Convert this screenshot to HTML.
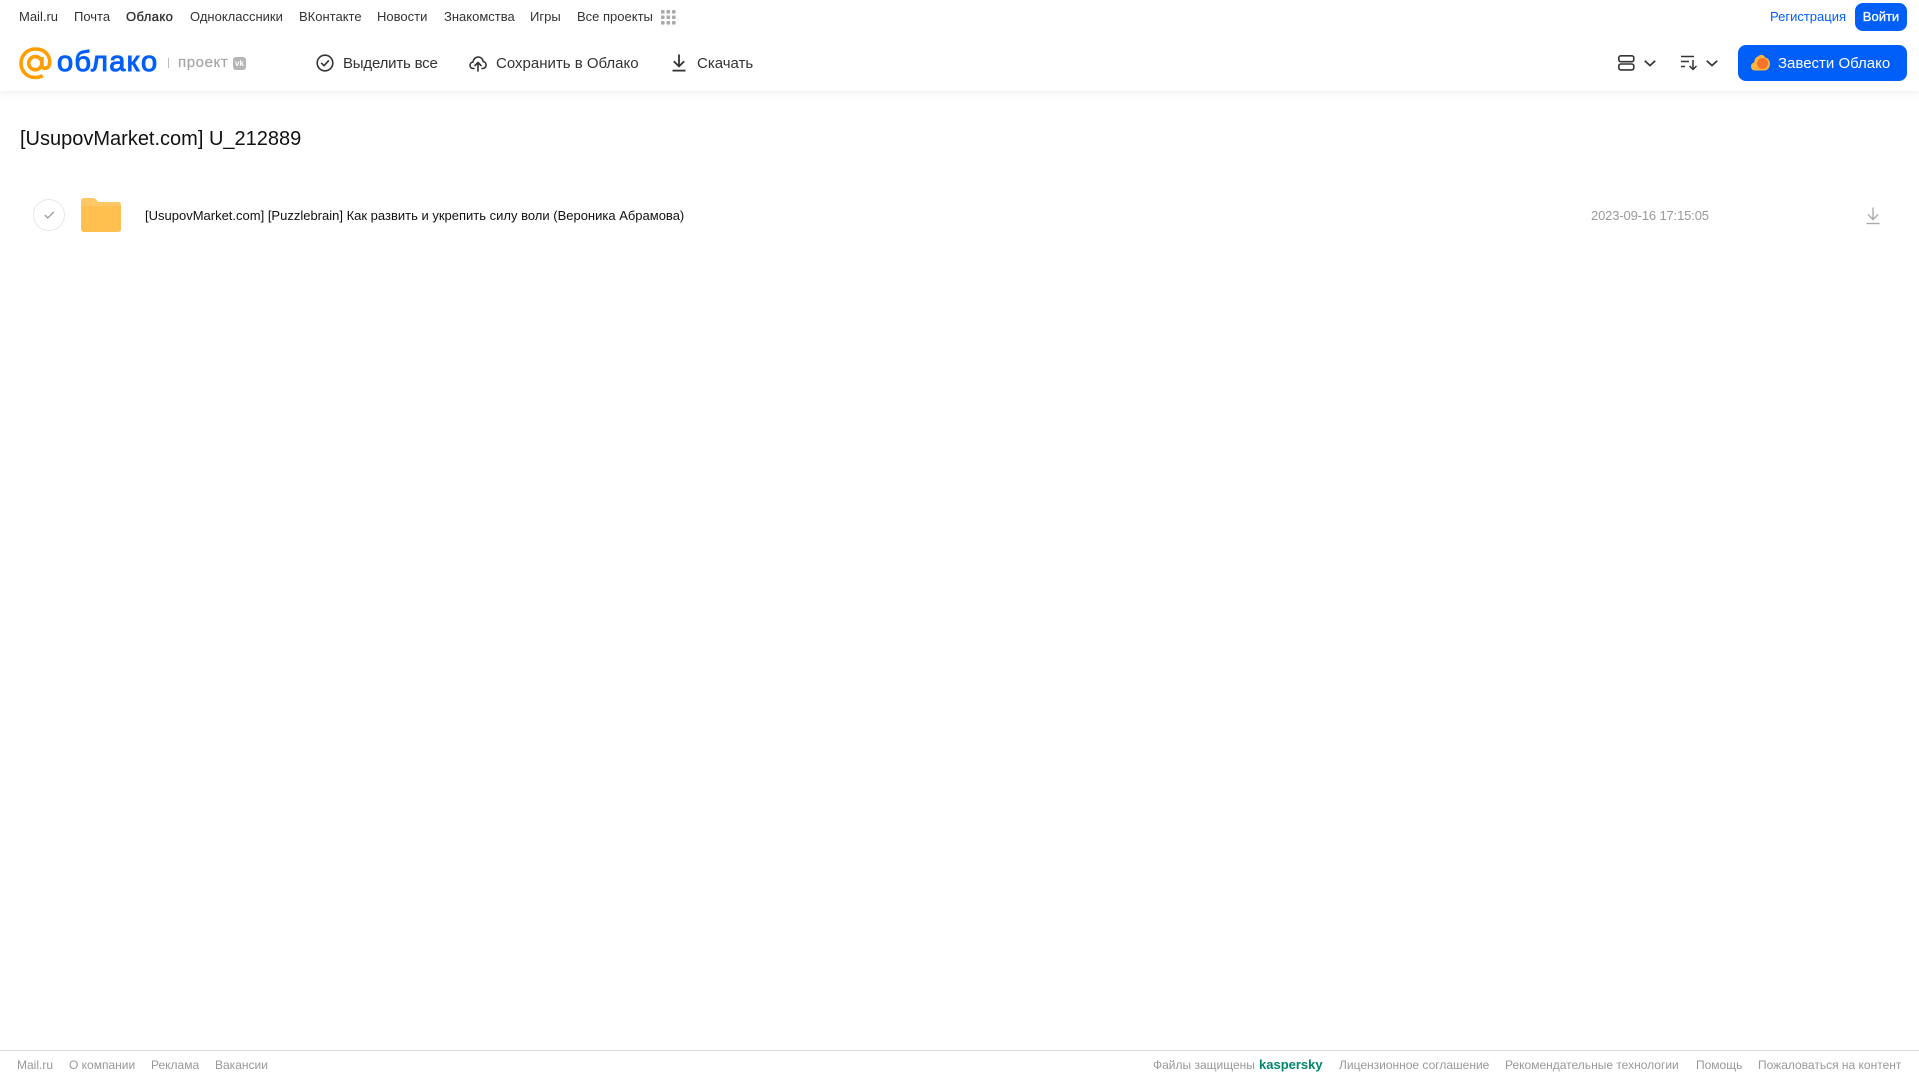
<!DOCTYPE html>
<html lang="ru">
<head>
<meta charset="utf-8">
<title>Облако</title>
<style>
html,body{margin:0;padding:0;background:#fff;}
body{position:relative;width:1919px;height:1079px;overflow:hidden;font-family:"Liberation Sans",Arial,sans-serif;}
.t{position:absolute;white-space:nowrap;line-height:18px;}
.n{top:8px;font-size:13px;color:#333;}
.b{top:54px;font-size:15px;color:#333;line-height:20px;}
.f{top:1056px;font-size:12px;color:#999;}
svg{position:absolute;overflow:visible;}
</style>
</head>
<body>
<div style="position:absolute;left:0;top:0;width:1919px;height:91px;background:#fff;box-shadow:0 2px 8px rgba(0,0,0,.07);"></div>

<span class="t n" style="left:19px">Mail.ru</span>
<span class="t n" style="left:74px">Почта</span>
<span class="t n" style="left:126px;letter-spacing:.4px;-webkit-text-stroke:.35px #333">Облако</span>
<span class="t n" style="left:190px">Одноклассники</span>
<span class="t n" style="left:299px">ВКонтакте</span>
<span class="t n" style="left:377px">Новости</span>
<span class="t n" style="left:444px">Знакомства</span>
<span class="t n" style="left:530px">Игры</span>
<span class="t n" style="left:577px">Все проекты</span>
<svg style="left:661px;top:10px" width="15" height="15" viewBox="0 0 15 15" fill="#aaa">
<rect x="0" y="0" width="3.6" height="3.6" rx=".8"/><rect x="5.500" y="0" width="3.6" height="3.6" rx=".8"/><rect x="11" y="0" width="3.6" height="3.6" rx=".8"/>
<rect x="0" y="5.500" width="3.6" height="3.6" rx=".8"/><rect x="5.500" y="5.500" width="3.6" height="3.6" rx=".8"/><rect x="11" y="5.500" width="3.6" height="3.6" rx=".8"/>
<rect x="0" y="11" width="3.6" height="3.6" rx=".8"/><rect x="5.500" y="11" width="3.6" height="3.6" rx=".8"/><rect x="11" y="11" width="3.6" height="3.6" rx=".8"/>
</svg>

<span class="t n" style="left:1770px;color:#005ff9">Регистрация</span>
<div style="position:absolute;left:1855px;top:3px;width:52px;height:28px;border-radius:8px;background:#005ff9;color:#fff;font-size:13px;-webkit-text-stroke:.3px #fff;line-height:27px;text-align:center;">Войти</div>

<!-- logo -->
<svg style="left:19px;top:47px" width="33" height="33" viewBox="0 0 33 33" fill="none" stroke="#ff9e00" stroke-width="3.6">
<circle cx="16.300" cy="16.200" r="6.600"/>
<path d="M22.900 10v8.600c0 3.600 5.900 3.800 7.400-.6C31.900 12.500 29 2 16.300 2 8 2 2 8.500 2 16.300 2 24.500 8.300 30.500 16.300 30.500c3 0 5.400-.7 7.400-1.900"/>
</svg>
<span class="t" style="left:57px;top:44px;font-size:29px;line-height:36px;color:#005ff9;-webkit-text-stroke:1px #005ff9;letter-spacing:1.3px;">облако</span>
<div style="position:absolute;left:168px;top:58px;width:1px;height:10px;background:#bbb;"></div>
<span class="t" style="left:178px;top:53px;font-size:15px;line-height:20px;color:#a5a5a5;letter-spacing:.6px;-webkit-text-stroke:.2px #a5a5a5;">проект</span>
<div style="position:absolute;left:233px;top:57px;width:13px;height:13px;border-radius:3px;background:#b5b5b5;color:#fff;font-size:8px;font-weight:bold;line-height:13px;text-align:center;">vk</div>

<!-- toolbar -->
<svg style="left:316px;top:54px" width="18" height="18" viewBox="0 0 18 18" fill="none" stroke="#333" stroke-width="1.600">
<circle cx="9" cy="9" r="7.800"/><path d="M5.600 9.300l2.400 2.400 4.400-4.800" stroke-linecap="round" stroke-linejoin="round"/>
</svg>
<span class="t b" style="left:343px;letter-spacing:-.2px">Выделить все</span>

<svg style="left:469px;top:54px" width="18" height="18" viewBox="0 0 18 18" fill="none" stroke="#333" stroke-width="1.600" stroke-linecap="round" stroke-linejoin="round">
<path d="M5 14.500H4.300C2.300 14.500 1 13 1 11.300c0-1.700 1.200-3 2.900-3.200C4.300 5.300 6.400 3 9.200 3c2.700 0 4.600 2.100 5 4.600 1.700.2 2.900 1.700 2.900 3.400 0 1.900-1.400 3.500-3.300 3.500H13"/>
<path d="M9 17V9M6 11.500L9 8.500l3 3"/>
</svg>
<span class="t b" style="left:496px">Сохранить в Облако</span>

<svg style="left:671px;top:54px" width="16" height="18" viewBox="0 0 16 18" fill="none" stroke="#333" stroke-width="1.800">
<path d="M8 0.500V12M2.800 7.200L8 12.400l5.200-5.200"/><path d="M1.500 16.600h13"/>
</svg>
<span class="t b" style="left:697px">Скачать</span>

<!-- view -->
<svg style="left:1618px;top:55px" width="17" height="16" viewBox="0 0 17 16" fill="none" stroke="#333" stroke-width="1.600">
<rect x=".8" y=".8" width="15" height="5.900" rx="2"/><rect x=".8" y="9" width="15" height="5.900" rx="2"/>
</svg>
<svg style="left:1644px;top:60px" width="12" height="7" viewBox="0 0 12 7" fill="none" stroke="#333" stroke-width="1.700"><path d="M.8.800L6 5.600 11.200.800"/></svg>
<svg style="left:1681px;top:55px" width="17" height="16" viewBox="0 0 17 16" fill="none" stroke="#333" stroke-width="1.400">
<path d="M0 1.500h13M0 6.500h8M0 11.500h4"/><path d="M12 5v9.500M8.500 11l3.500 3.500 3.500-3.500" stroke-width="1.500"/>
</svg>
<svg style="left:1706px;top:60px" width="12" height="7" viewBox="0 0 12 7" fill="none" stroke="#333" stroke-width="1.700"><path d="M.8.800L6 5.600 11.200.800"/></svg>

<div style="position:absolute;left:1738px;top:45px;width:169px;height:36px;border-radius:8px;background:#005ff9;"></div>
<svg style="left:1751px;top:54px" width="19" height="17" viewBox="0 0 19 17">
<path d="M4 16.500C1.800 16.500 0 14.800 0 12.500c0-2 1.300-3.600 3.200-4C3.500 5 5 3 7 2.500 9 0 13 .5 14 3.500c2.800.5 5 2.800 5 6.200 0 3.800-2.500 6.800-6 6.800z" fill="#ffb53c"/>
<circle cx="11.500" cy="9.500" r="5.500" fill="#f5732a"/>
</svg>
<span class="t b" style="left:1778px;color:#fff">Завести Облако</span>

<!-- title -->
<div class="t" style="left:20px;top:126px;font-size:20px;line-height:26px;color:#111;">[UsupovMarket.com] U_212889</div>

<!-- row -->
<div style="position:absolute;left:33px;top:199px;width:30px;height:30px;border:1px solid #e8e8e8;border-radius:50%;"></div>
<svg style="left:44px;top:211px" width="11" height="8" viewBox="0 0 11 8" fill="none" stroke="#999" stroke-width="1.300"><path d="M.8 4l3 3L10 .8"/></svg>

<svg style="left:81px;top:198px" width="40" height="34" viewBox="0 0 40 34">
<path d="M0 3C0 1.300 1.300 0 3 0h9c1.500 0 2.500.7 3.500 2l1.500 2h20c1.700 0 3 1.300 3 3v24c0 1.700-1.300 3-3 3H3c-1.700 0-3-1.300-3-3z" fill="#ffc050"/>
<path d="M0 8h40v-1c0-1.700-1.300-3-3-3H17L15.500 2C14.500.7 13.500 0 12 0H3C1.300 0 0 1.300 0 3z" fill="#ffc766"/>
</svg>

<span class="t" style="left:145px;top:207px;font-size:13px;color:#111;">[UsupovMarket.com] [Puzzlebrain] Как развить и укрепить силу воли (Вероника Абрамова)</span>
<span class="t" style="left:1591px;top:207px;font-size:13px;letter-spacing:-.15px;color:#999;">2023-09-16 17:15:05</span>
<svg style="left:1866px;top:207px" width="14" height="18" viewBox="0 0 14 18" fill="none" stroke="#aaa" stroke-width="1.400">
<path d="M7 .5V12M2 7.500l5 5 5-5"/><path d="M.5 16.500h13"/>
</svg>

<!-- footer -->
<div style="position:absolute;left:0;top:1050px;width:1919px;height:1px;background:#ddd;"></div>
<span class="t f" style="left:17px">Mail.ru</span>
<span class="t f" style="left:69px">О компании</span>
<span class="t f" style="left:151px">Реклама</span>
<span class="t f" style="left:215px">Вакансии</span>
<span class="t f" style="left:1153px">Файлы защищены</span>
<span class="t f" style="left:1259px;color:#00866c;font-weight:bold;font-size:13px;">kaspersky</span>
<span class="t f" style="left:1339px">Лицензионное соглашение</span>
<span class="t f" style="left:1505px">Рекомендательные технологии</span>
<span class="t f" style="left:1696px">Помощь</span>
<span class="t f" style="left:1758px">Пожаловаться на контент</span>
</body>
</html>
